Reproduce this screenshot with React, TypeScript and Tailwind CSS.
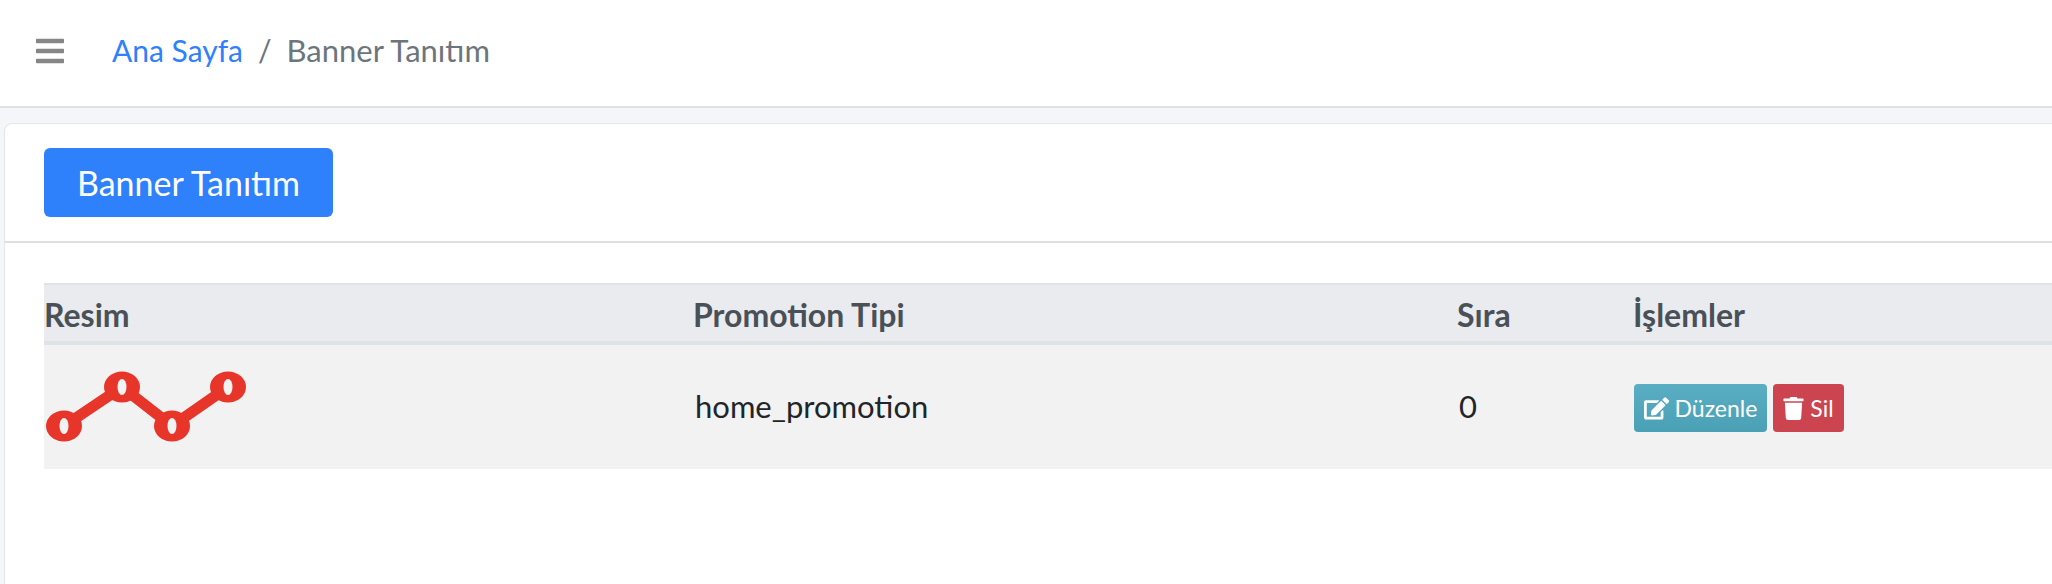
import { FaBars, FaEdit, FaTrash } from "react-icons/fa";

const FONT = "font-['Lato',sans-serif]";
const TH = "h-[62px] border-t-2 border-b-4 border-[#dfe2e6] pt-[3px] font-bold";

function Navbar() {
  return (
    <nav className="flex h-[108px] items-center border-b-2 border-[#dee2e6] bg-white pb-[5px] pl-[34px]">
      <FaBars className="h-[32px] w-[32px] text-[#868686]" />
      <ol className="ml-[46px] flex items-center text-[30px]">
        <li className="text-[#2f80fb]">Ana Sayfa</li>
        <li className="px-[15px] text-[#6c757d]">/</li>
        <li className="text-[31px] text-[#6c757d]">Banner Tanıtım</li>
      </ol>
    </nav>
  );
}

function PromotionLogo() {
  const points = [
    [20, 56],
    [78, 17],
    [128, 56],
    [184, 17],
  ];
  return (
    <svg width="204" height="75" viewBox="0 0 204 75" className="block">
      <polyline points={points.join(" ")} fill="none" stroke="#e73529" strokeWidth="11" />
      {points.map(([cx, cy]) => (
        <g key={cx}>
          <ellipse cx={cx} cy={cy} rx="18" ry="15.5" fill="#e73529" />
          <ellipse cx={cx} cy={cy} rx="4.5" ry="8" fill="#f2f2f2" />
        </g>
      ))}
    </svg>
  );
}

export default function App() {
  return (
    <div className={`${FONT} h-[584px] w-[2052px] overflow-hidden bg-[#f4f6f9] text-[#212529]`}>
      <Navbar />
      <main className="ml-[4px] mt-[15px] h-[500px] rounded-tl-[8px] border-l border-t border-[#e4e6e9] bg-white">
        <div className="h-[119px] border-b-2 border-[#dfdfdf] pl-[39px] pt-[24px]">
          <button className="h-[69px] w-[289px] rounded-[6px] bg-[#2f80fb] text-[34px] text-white">
            Banner Tanıtım
          </button>
        </div>
        <div className="ml-[39px] mt-[40px]">
          <table className="w-[2008px] table-fixed border-separate border-spacing-0 text-left">
            <thead>
              <tr className="bg-[#e9ebef] text-[32px] text-[#495057]">
                <th className={`${TH} w-[649px]`}>Resim</th>
                <th className={`${TH} w-[764px]`}>Promotion Tipi</th>
                <th className={`${TH} w-[176px]`}>Sıra</th>
                <th className={TH}>İşlemler</th>
              </tr>
            </thead>
            <tbody>
              <tr className="h-[124px] bg-[#f2f2f2] text-[31px]">
                <td className="pt-[1px]">
                  <PromotionLogo />
                </td>
                <td className="pb-[1px] pl-[2px]">home_promotion</td>
                <td className="pb-[1px] pl-[2px]">0</td>
                <td className="pt-[2px]">
                  <div className="flex gap-[6px] pl-[1px] text-[23px] text-white">
                    <span className="flex h-[48px] w-[133px] items-center justify-center gap-[6px] rounded-[4px] bg-linear-to-b from-[#5aaec3] to-[#4aa0b5]">
                      <FaEdit className="h-[25px] w-[25px]" />
                      Düzenle
                    </span>
                    <span className="flex h-[48px] w-[71px] items-center justify-center gap-[6px] rounded-[4px] bg-[#cc444f]">
                      <FaTrash className="h-[23px] w-[21px]" />
                      Sil
                    </span>
                  </div>
                </td>
              </tr>
            </tbody>
          </table>
        </div>
      </main>
    </div>
  );
}
